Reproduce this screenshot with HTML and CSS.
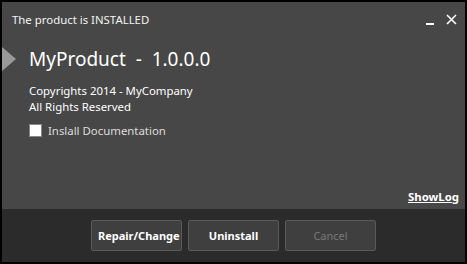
FILE: index.html
```html
<!DOCTYPE html>
<html lang="en">
<head>
    <meta charset="UTF-8">
    <title>MyProduct Setup</title>
    <link rel="stylesheet" href="styles.css">
</head>
<body>

<div class="window">
    <div class="titlebar">
        <span class="status">The product is INSTALLED</span>
        <div class="controls">
            <span class="minimize"></span>
            <svg class="close" width="11" height="11" viewBox="0 0 11 11">
                <path d="M1 1 L10 10 M10 1 L1 10" stroke="#fff" stroke-width="1.6"/>
            </svg>
        </div>
    </div>

    <div class="main">
        <div class="heading">
            <span class="arrow"></span>
            <h1>MyProduct&nbsp; -&nbsp; 1.0.0.0</h1>
        </div>
        <p class="copyright">Copyrights 2014 - MyCompany<br>All Rights Reserved</p>
        <label class="option">
            <input type="checkbox" id="docs">
            <span>Inslall Documentation</span>
        </label>
        <a class="showlog" href="#">ShowLog</a>
    </div>

    <div class="footer">
        <button>Repair/Change</button>
        <button>Uninstall</button>
        <button disabled>Cancel</button>
    </div>
</div>

</body>
</html>
```

FILE: styles.css
```css
body {
    margin: 0;
    font-family: "Segoe UI", "Noto Sans", sans-serif;
    font-size: 11.4px;
    color: #fff;
}
.window {
    width: 467px;
    height: 264px;
    box-sizing: border-box;
    border: 2px solid #000;
    background: #474747;
    display: flex;
    flex-direction: column;
}
.titlebar {
    display: flex;
    justify-content: space-between;
    align-items: center;
    height: 34px;
    padding: 0 8px 0 10px;
}
.status {
    color: #f4f4f4;
}
.controls {
    display: flex;
    align-items: center;
    gap: 12px;
}
.minimize {
    width: 8px;
    height: 2px;
    background: #fff;
    margin-top: 9px;
}
.main {
    flex: 1;
    display: flex;
    flex-direction: column;
}
.heading {
    display: flex;
    align-items: center;
    height: 46px;
}
.arrow {
    width: 0;
    height: 0;
    border-top: 12px solid transparent;
    border-bottom: 12px solid transparent;
    border-left: 14px solid #999;
    margin-right: 13px;
}
h1 {
    margin: 0;
    font-size: 19px;
    font-weight: normal;
}
.copyright {
    margin: 1px 0 0 27px;
    line-height: 16px;
}
.option {
    display: flex;
    align-items: center;
    gap: 6px;
    margin: 8px 0 0 27px;
    color: #ddd;
}
.option input {
    appearance: none;
    width: 13px;
    height: 13px;
    margin: 0;
    background: #fff;
    border: 1px solid #888;
}
.showlog {
    margin-top: auto;
    align-self: flex-end;
    margin-right: 6px;
    margin-bottom: 5px;
    color: #fff;
    font-weight: bold;
}
.footer {
    height: 53px;
    background: #2b2b2b;
    display: flex;
    justify-content: center;
    align-items: center;
    gap: 6px;
}
button {
    width: 91px;
    height: 31px;
    background: #3f3f3f;
    border: 1px solid #5a5a5a;
    border-radius: 2px;
    color: #fff;
    font-family: inherit;
    font-size: 11px;
    font-weight: bold;
}
button:disabled {
    color: #777;
    font-weight: normal;
}
```
